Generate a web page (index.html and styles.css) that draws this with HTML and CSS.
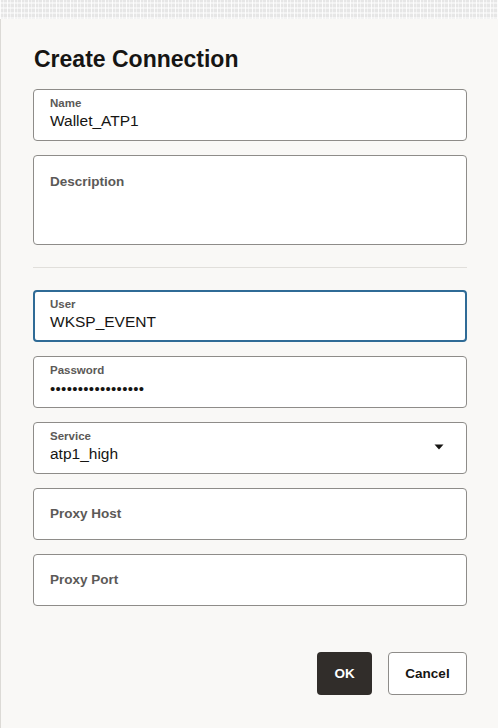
FILE: index.html
```html
<!DOCTYPE html>
<html lang="en">
<head>
<meta charset="utf-8">
<title>Create Connection</title>
<link rel="stylesheet" href="styles.css">
</head>
<body>
<div class="backdrop"></div>
<div class="dialog">
  <h1 class="title">Create Connection</h1>
  <div class="form">
    <div class="field filled">
      <span class="label">Name</span>
      <span class="value">Wallet_ATP1</span>
    </div>
    <div class="field area">
      <span class="label-empty">Description</span>
    </div>
    <div class="divider"></div>
    <div class="field filled focused">
      <span class="label">User</span>
      <span class="value">WKSP_EVENT</span>
    </div>
    <div class="field filled">
      <span class="label">Password</span>
      <span class="value dots">•••••••••••••••••</span>
    </div>
    <div class="field filled select">
      <span class="label">Service</span>
      <span class="value">atp1_high</span>
      <svg class="caret" width="10" height="6" viewBox="0 0 10 6"><path d="M0.5 0.5 H9.5 L5 5.5 Z" fill="#161513"/></svg>
    </div>
    <div class="field empty">
      <span class="label-empty">Proxy Host</span>
    </div>
    <div class="field empty">
      <span class="label-empty">Proxy Port</span>
    </div>
  </div>
  <div class="footer">
    <button class="btn primary">OK</button>
    <button class="btn secondary">Cancel</button>
  </div>
</div>
</body>
</html>
```
FILE: styles.css
```css
html, body {
  margin: 0;
  padding: 0;
  height: 100%;
}
body {
  font-family: "Liberation Sans", Arial, sans-serif;
  background: #f9f8f6;
  color: #161513;
  display: flex;
  flex-direction: column;
}
.backdrop {
  height: 19px;
  flex: none;
  background-color: #e6e6e6;
  background-image:
    repeating-linear-gradient(90deg, rgba(255,255,255,0.85) 0 1px, transparent 1px 3px, rgba(255,255,255,0.5) 3px 4px, transparent 4px 7px),
    repeating-linear-gradient(0deg, rgba(255,255,255,0.5) 0 2px, transparent 2px 5px);
}
.dialog {
  flex: 1;
  background: #f9f8f6;
  border-left: 1px solid #dcdad6;
  padding: 26px 31px 0 32px;
  display: flex;
  flex-direction: column;
}
.title {
  margin: 0;
  font-size: 23px;
  line-height: 28px;
  font-weight: 700;
  color: #161513;
  padding-left: 1px;
}
.form {
  margin-top: 16px;
  display: flex;
  flex-direction: column;
  gap: 14px;
}
.field {
  position: relative;
  box-sizing: border-box;
  height: 52px;
  background: #ffffff;
  border: 1px solid #8e8c89;
  border-radius: 4px;
  padding: 0 16px;
  display: flex;
  flex-direction: column;
}
.field.filled {
  padding-top: 6px;
}
.label {
  font-size: 11.5px;
  line-height: 14px;
  font-weight: 700;
  color: #5b5957;
}
.value {
  font-size: 15.5px;
  line-height: 22px;
  color: #161513;
}
.value.dots {
  font-size: 15px;
  letter-spacing: 0.3px;
  line-height: 22px;
  margin-top: 1px;
}
.label-empty {
  font-size: 13.5px;
  line-height: 18px;
  font-weight: 700;
  color: #5b5957;
}
.field.area {
  height: 90px;
  padding-top: 17px;
}
.field.empty {
  justify-content: center;
}
.field.focused {
  border: 2px solid #2f6b96;
  padding: 5px 15px 0;
}
.caret {
  position: absolute;
  right: 22px;
  top: 21px;
}
.divider {
  height: 1px;
  background: #e1dfdb;
  margin: 8px 0 8px;
}
.footer {
  margin-top: 46px;
  display: flex;
  justify-content: flex-end;
  gap: 16px;
}
.btn {
  box-sizing: border-box;
  height: 43px;
  border-radius: 4px;
  font-family: "Liberation Sans", Arial, sans-serif;
  font-size: 13.5px;
  font-weight: 700;
  cursor: pointer;
}
.btn.primary {
  width: 55px;
  background: #312d2a;
  color: #ffffff;
  border: none;
}
.btn.secondary {
  width: 79px;
  background: #ffffff;
  color: #161513;
  border: 1px solid #8e8c89;
}
```
